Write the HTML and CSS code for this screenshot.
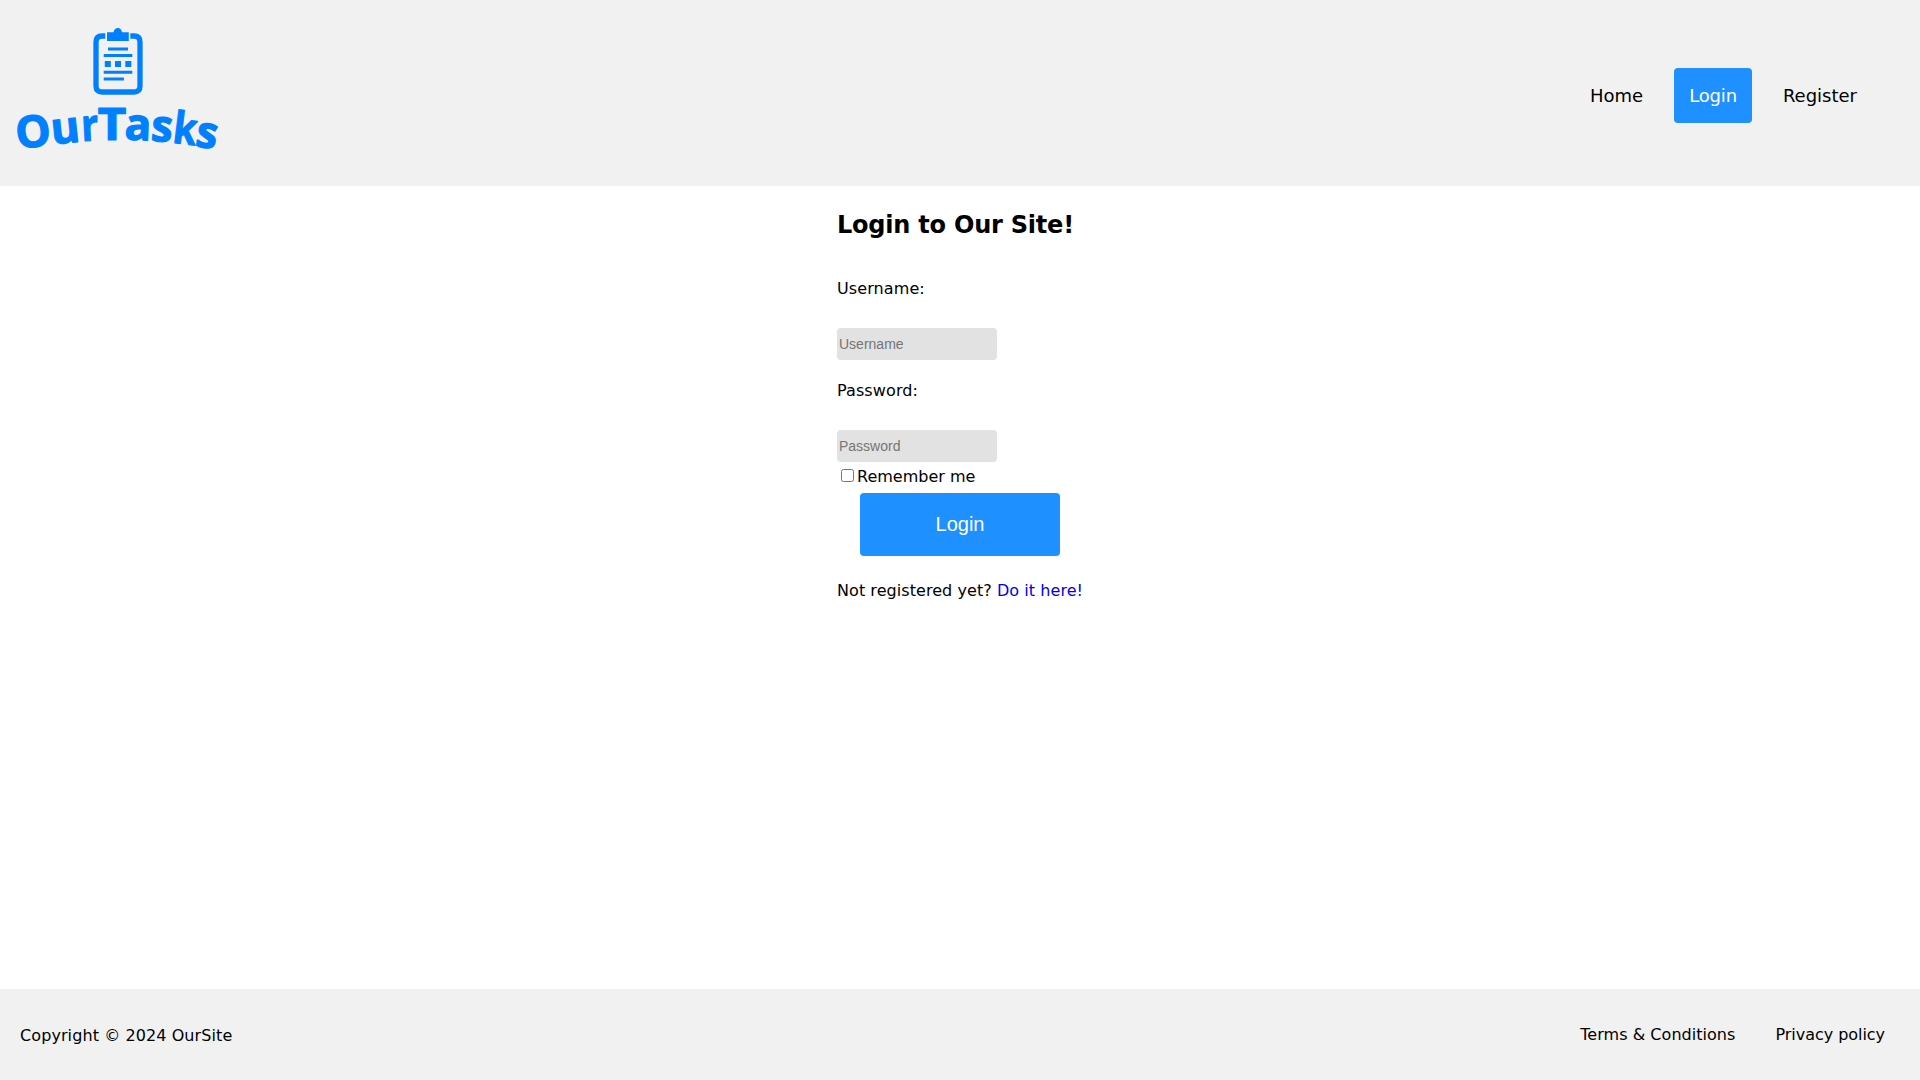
FILE: index.html
```html
<!DOCTYPE html>
<html lang="en">
<head>
<meta charset="utf-8">
<title>OurTasks - Login</title>
<link rel="stylesheet" href="styles.css">
</head>
<body>
<header class="header">
  <a class="logo" href="#">
    <svg width="240" height="186" viewBox="0 0 240 186" role="img" aria-label="OurTasks">
      <g fill="none" stroke="#0080ff" stroke-width="5.3">
        <path d="M105.3 36H102Q96 36 96 42V86Q96 92 102 92H134Q140 92 140 86V42Q140 36 134 36H130.3"/>
      </g>
      <g fill="#0080ff">
        <path d="M107 32.2H113.6C114.5 26.6 121.1 26.6 122 32.2H128.8V41H107Z"/>
        <path d="M108 47.5h20v3h-20zM103.7 54h28.6v3h-28.6zM104.8 61h6v6h-6zM115 61h6v6h-6zM125.3 61h6v6h-6zM103.7 70.7h28.6v3h-28.6zM103.7 77.5h20.2v3h-20.2z"/>
      </g>
      <g class="wordmark">
        <text transform="translate(34.5 147) rotate(-6) scale(1.01 1)">O</text>
        <text transform="translate(66.5 143) rotate(-6)">u</text>
        <text transform="translate(90.5 140.5) rotate(-3) scale(.85 1)">r</text>
        <text transform="translate(112 139.5) scale(1.12 1)">T</text>
        <text transform="translate(137.5 140) rotate(2)">a</text>
        <text transform="translate(161 141.5) rotate(5) scale(.98 1)">s</text>
        <text transform="translate(183.5 144) rotate(7) scale(.86 1)">k</text>
        <text transform="translate(204.8 147.5) rotate(10) scale(.98 1)">s</text>
      </g>
    </svg>
  </a>
  <nav class="nav">
    <a href="#">Home</a>
    <a class="active" href="#">Login</a>
    <a href="#">Register</a>
  </nav>
</header>
<main class="main">
  <form class="form">
    <h2>Login to Our Site!</h2>
    <label class="label" for="user">Username:</label>
    <input class="field" id="user" type="text" placeholder="Username">
    <label class="label" for="pass">Password:</label>
    <input class="field" id="pass" type="password" placeholder="Password">
    <label class="remember"><input type="checkbox">Remember me</label>
    <button class="submit" type="button">Login</button>
    <p class="signup">Not registered yet? <a href="#">Do it here!</a></p>
  </form>
</main>
<footer class="footer">
  <span class="copyright">Copyright © 2024 OurSite</span>
  <div class="links"><a href="#">Terms &amp; Conditions</a><a href="#">Privacy policy</a></div>
</footer>
</body>
</html>
```
FILE: styles.css
```css
* { box-sizing: border-box; }
body {
  margin: 0;
  min-height: 100vh;
  display: flex;
  flex-direction: column;
  font: 16px/19px Verdana, "DejaVu Sans", sans-serif;
  color: #000;
  background: #fff;
}
a { text-decoration: none; color: inherit; }
.header {
  height: 186px;
  display: flex;
  justify-content: space-between;
  background: #f1f1f1;
}
.logo svg { display: block; }
.wordmark text {
  font: 700 44px "Open Sans", sans-serif;
  text-anchor: middle;
  fill: #0080ff;
  stroke: #0080ff;
  stroke-width: 1.2;
  stroke-linejoin: round;
}
.nav {
  display: flex;
  align-items: flex-start;
  gap: 16px;
  padding: 68px 48px 0 0;
  font-size: 18px;
  line-height: 21px;
}
.nav a { padding: 17px 15px; border-radius: 4px; }
.nav .active { background: #1e90ff; color: #fff; letter-spacing: -0.17px; }
.main { flex: 1; display: flex; justify-content: center; }
.form {
  width: 246px;
  display: flex;
  flex-direction: column;
  align-items: flex-start;
}
h2 { margin: 25px 0 0; font-size: 24px; line-height: 28px; white-space: nowrap; letter-spacing: -0.22px; }
.label { margin-top: 40px; letter-spacing: 0.1px; }
.field + .label { margin-top: 21px; }
.field {
  width: 160px;
  height: 32px;
  margin-top: 30px;
  padding: 1px 2px;
  border: 0;
  border-radius: 4px;
  background: #e2e2e2;
  font: 14px Arial, "Liberation Sans", sans-serif;
}
.remember { display: flex; align-items: center; margin-top: 5px; }
.remember input { margin: -2px 3px 0 4px; }
.submit {
  width: 200px;
  height: 63px;
  margin: 7px 0 0 23px;
  border: 0;
  border-radius: 4px;
  background: #1e90ff;
  color: #fff;
  font: 20px Arial, "Liberation Sans", sans-serif;
}
.signup { margin: 25px 0 0; white-space: nowrap; letter-spacing: 0.06px; }
.signup a { color: #0000ee; }
.footer {
  height: 91px;
  display: flex;
  justify-content: space-between;
  align-items: center;
  padding: 0 35px 0 20px;
  background: #f1f1f1;
}
.copyright { padding-top: 2px; letter-spacing: 0.09px; }
.links { display: flex; gap: 40px; }
.links a:first-child { letter-spacing: 0.04px; }
.links a:last-child { letter-spacing: -0.04px; }
```
